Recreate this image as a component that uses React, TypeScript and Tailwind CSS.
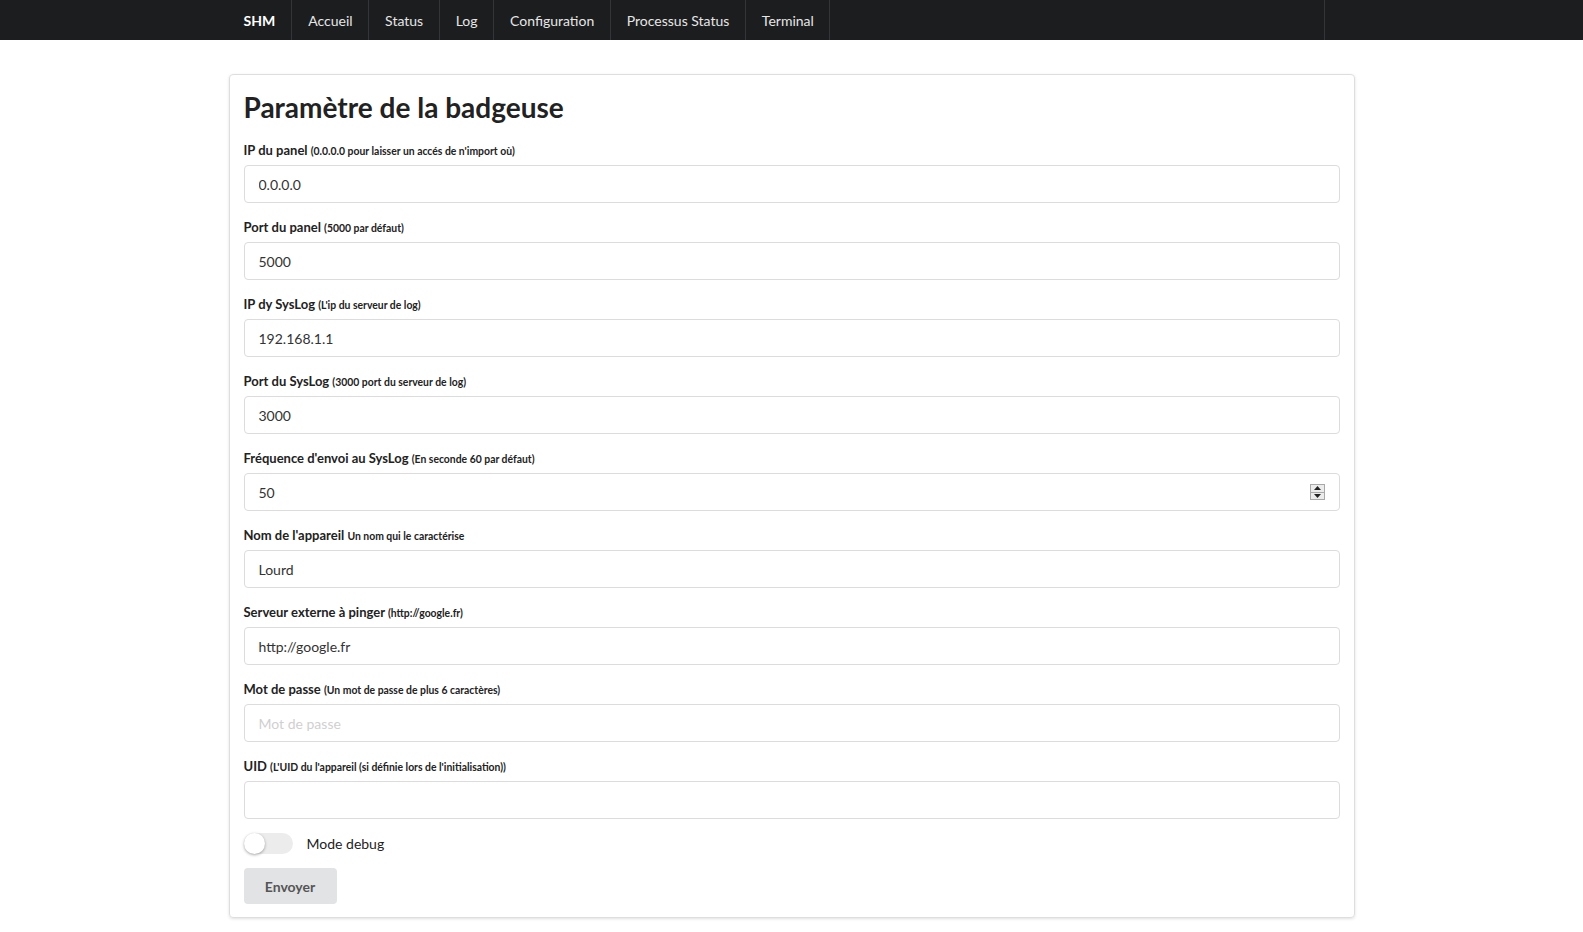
import React from 'react';

interface Field {
    label: string;
    hint: string;
    value?: string;
    placeholder?: string;
    spinner?: boolean;
}

const fields: Field[] = [
    { label: 'IP du panel', hint: "(0.0.0.0 pour laisser un accés de n'import où)", value: '0.0.0.0' },
    { label: 'Port du panel', hint: '(5000 par défaut)', value: '5000' },
    { label: 'IP dy SysLog', hint: "(L'ip du serveur de log)", value: '192.168.1.1' },
    { label: 'Port du SysLog', hint: '(3000 port du serveur de log)', value: '3000' },
    { label: "Fréquence d'envoi au SysLog", hint: '(En seconde 60 par défaut)', value: '50', spinner: true },
    { label: "Nom de l'appareil", hint: 'Un nom qui le caractérise', value: 'Lourd' },
    { label: 'Serveur externe à pinger', hint: '(http://google.fr)', value: 'http://google.fr' },
    { label: 'Mot de passe', hint: '(Un mot de passe de plus 6 caractères)', placeholder: 'Mot de passe' },
    { label: 'UID', hint: "(L'UID du l'appareil (si définie lors de l'initialisation))", value: '' },
];

const navItems = ['Accueil', 'Status', 'Log', 'Configuration', 'Processus Status', 'Terminal'];

const Spinner: React.FC = () => (
    <div className="absolute right-[15px] top-1/2 -translate-y-1/2 flex h-[16px] w-[15px] flex-col border border-[#a9a9a9] bg-[#ececec]">
        <div className="flex flex-1 items-center justify-center border-b border-[#a9a9a9]">
            <svg width="7" height="4" viewBox="0 0 7 4"><path d="M3.5 0L7 4H0z" fill="#222" /></svg>
        </div>
        <div className="flex flex-1 items-center justify-center">
            <svg width="7" height="4" viewBox="0 0 7 4"><path d="M0 0h7L3.5 4z" fill="#222" /></svg>
        </div>
    </div>
);

const FormField: React.FC<{ field: Field }> = ({ field }) => (
    <div className="mb-[14px]">
        <label className="mb-[5px] block h-[20px] text-[13px] leading-[20px] font-bold text-[#222]">
            {field.label} <span className="text-[10.4px] leading-none font-bold">{field.hint}</span>
        </label>
        <div className="relative">
            <input
                readOnly
                value={field.value ?? ''}
                placeholder={field.placeholder}
                className="block h-[38px] w-full rounded-[4px] border border-[#dcdcdc] bg-white px-[14px] text-[14px] text-[#333] outline-none placeholder:text-[#d0d0d0]"
            />
            {field.spinner && <Spinner />}
        </div>
    </div>
);

export default function App() {
    return (
        <div className="min-h-screen bg-white font-[Lato,sans-serif]">
            <nav className="h-10 bg-[#1c1d1f]">
                <div className="mx-auto flex h-full w-[1126px]">
                    <a className="flex items-center border-r border-[#34353a] pr-[16px] pl-[15px] text-[14px] font-bold text-white">SHM</a>
                    {navItems.map((item) => (
                        <a key={item} className="flex items-center border-r border-[#34353a] pr-[15.5px] pl-[16px] text-[14px] text-[#e6e6e6]">
                            {item}
                        </a>
                    ))}
                    <div className="ml-auto w-[31px] border-l border-[#34353a]" />
                </div>
            </nav>
            <main className="mx-auto mt-[34px] w-[1126px] rounded-[4px] border border-[#dedede] px-[14px] pt-[14px] pb-[13px] shadow-[0_1px_3px_rgba(0,0,0,0.12)]">
                <h1 className="mb-[15px] text-[28px] leading-[36px] font-bold text-[#222]">Paramètre de la badgeuse</h1>
                {fields.map((f) => (
                    <FormField key={f.label} field={f} />
                ))}
                <div className="mt-[1px] flex items-center">
                    <div className="relative h-[21px] w-[49px] rounded-full bg-[#ececec]">
                        <div className="absolute top-0 left-0 h-[21px] w-[21px] rounded-full bg-white shadow-[0_1px_3px_rgba(0,0,0,0.35)]" />
                    </div>
                    <span className="ml-[14px] text-[14px] text-[#222]">Mode debug</span>
                </div>
                <button className="mt-[14px] h-[36px] w-[93px] rounded-[4px] bg-[#e2e3e5] text-[14px] font-bold text-[#555]">Envoyer</button>
            </main>
        </div>
    );
}
